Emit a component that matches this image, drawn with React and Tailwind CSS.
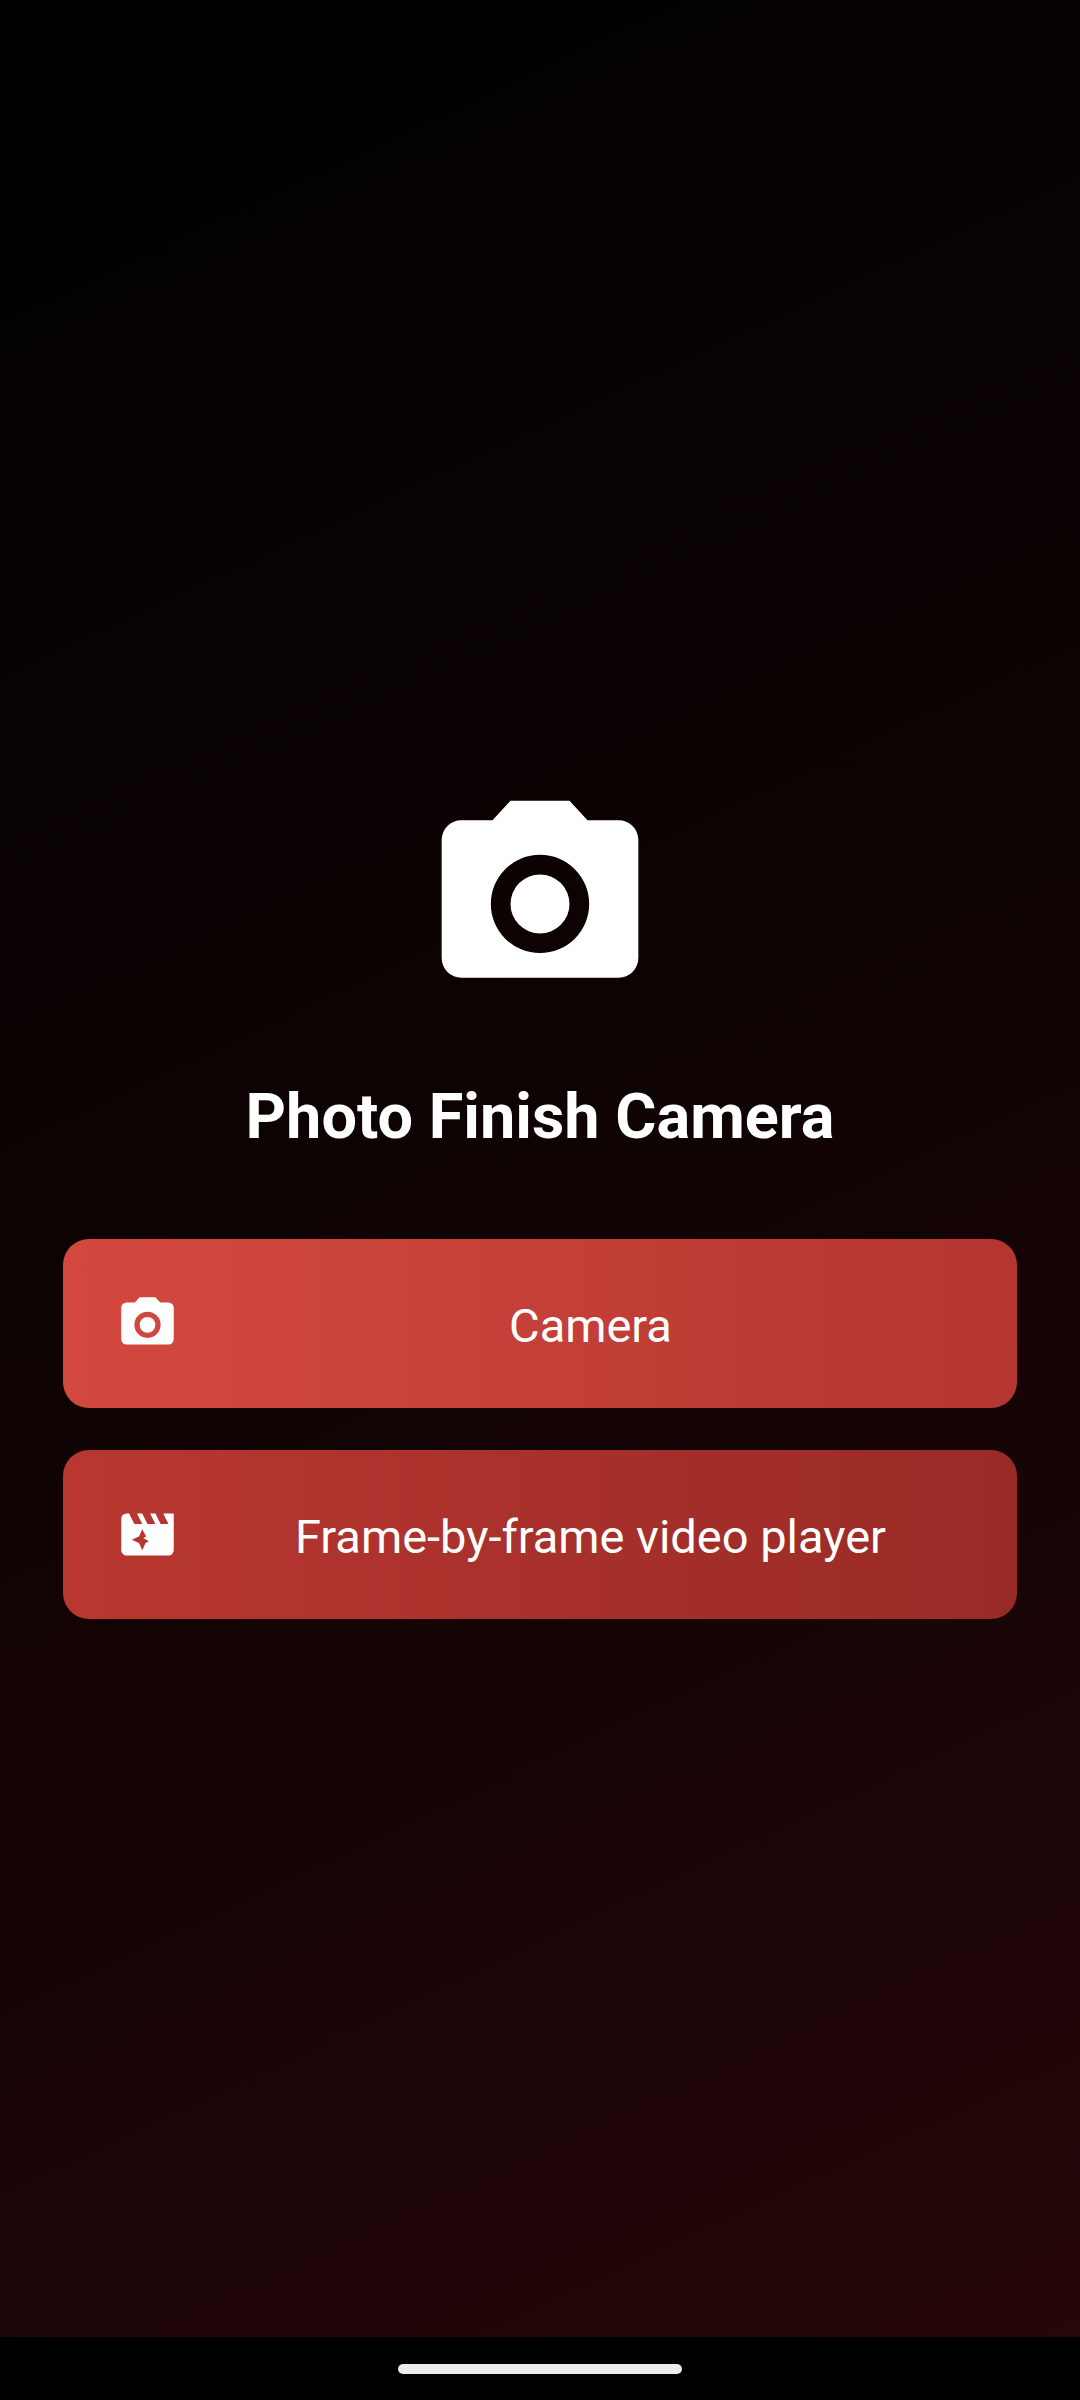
import React from 'react'

const PhotoCameraIcon = ({ className }) => (
  <svg viewBox="0 0 24 24" fill="currentColor" className={className} aria-hidden="true">
    <path
      fillRule="evenodd"
      d="M9 2 7.17 4H4a2 2 0 0 0-2 2v12a2 2 0 0 0 2 2h16a2 2 0 0 0 2-2V6a2 2 0 0 0-2-2h-3.17L15 2H9zm3 5.5a5 5 0 1 1 0 10 5 5 0 0 1 0-10z"
    />
    <circle cx="12" cy="12.5" r="3" />
  </svg>
)

const MovieIcon = ({ className }) => (
  <svg viewBox="0 0 24 24" fill="currentColor" className={className} aria-hidden="true">
    <path
      fillRule="evenodd"
      d="M18 4l2 4h-3l-2-4h-2l2 4h-3l-2-4H8l2 4H7L5 4H4a2 2 0 0 0-2 2v12a2 2 0 0 0 2 2h16a2 2 0 0 0 2-2V4h-4zM11.25 15.25 10 18l-1.25-2.75L6 14l2.75-1.25L10 10l1.5 2.8-1.1.5 2.1 1.3z"
    />
  </svg>
)

const MenuButton = ({ icon, label, className }) => (
  <button
    type="button"
    className={`flex h-[169px] w-full cursor-pointer items-center gap-[38px] rounded-[26px] px-[53px] text-white ${className}`}
  >
    {icon}
    <span className="flex-1 pt-1 text-center text-[47px] leading-[56px]">{label}</span>
  </button>
)

const App = () => {
  return (
    <div className="flex min-h-screen flex-col bg-black font-['Roboto',sans-serif] text-white">
      <main className="flex flex-1 flex-col items-center justify-center bg-[linear-gradient(155deg,#000000,#0f0303,#26070a)] px-[63px] pt-[63px]">
        <PhotoCameraIcon className="size-[236px]" />
        <h1 className="mt-[63px] text-[63px] leading-[74px] font-bold">Photo Finish Camera</h1>
        <div className="mt-[85px] flex w-full flex-col gap-[42px]">
          <MenuButton
            icon={<PhotoCameraIcon className="size-[63px]" />}
            label="Camera"
            className="bg-linear-to-r from-[#d4493f] to-[#b43630]"
          />
          <MenuButton
            icon={<MovieIcon className="size-[63px]" />}
            label="Frame-by-frame video player"
            className="bg-linear-to-r from-[#b93731] to-[#982a25]"
          />
        </div>
      </main>
      <footer className="flex h-[63px] items-center justify-center bg-black">
        <div className="h-[10px] w-[284px] rounded-full bg-[#ebebeb]"></div>
      </footer>
    </div>
  )
}

export default App
